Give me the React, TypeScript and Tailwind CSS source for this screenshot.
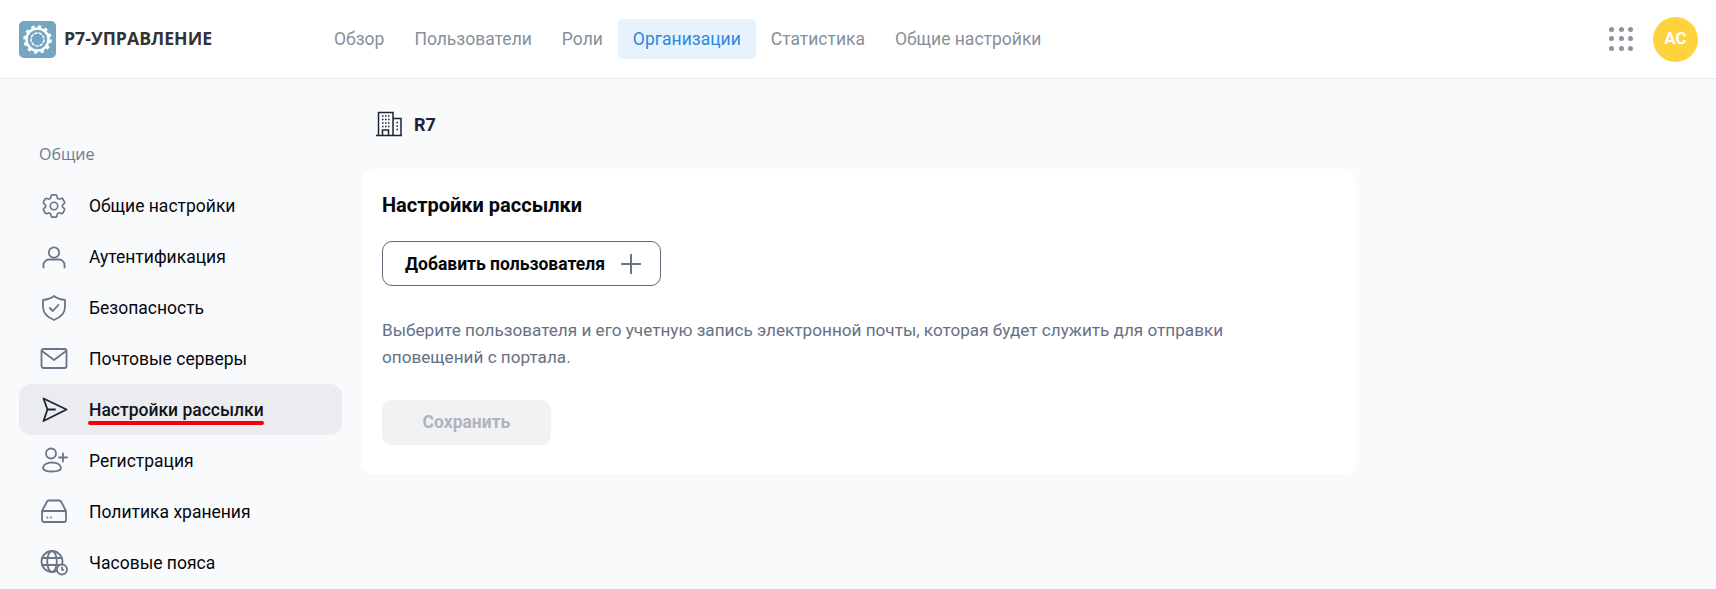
import type { ReactNode } from "react";

const navItems = ["Обзор", "Пользователи", "Роли", "Организации", "Статистика", "Общие настройки"];

const iconClass = "h-[30px] w-[30px] shrink-0 fill-none stroke-[#6b7588] stroke-[1.8]";

function Icon({ children, className = iconClass }: { children: ReactNode; className?: string }) {
  return (
    <svg viewBox="0 0 30 30" strokeLinecap="round" strokeLinejoin="round" className={className}>
      {children}
    </svg>
  );
}

const sideItems: { label: string; icon: ReactNode; active?: boolean }[] = [
  {
    label: "Общие настройки",
    icon: (
      <svg viewBox="1.5 1.5 21 21" strokeLinecap="round" strokeLinejoin="round" className="h-[30px] w-[30px] shrink-0 fill-none stroke-[#6b7588] stroke-[1.35] p-[2px]">
        <path d="M9.594 3.94c.09-.542.56-.94 1.11-.94h2.593c.55 0 1.02.398 1.11.94l.213 1.281c.063.374.313.686.645.87.074.04.147.083.22.127.325.196.72.257 1.075.124l1.217-.456a1.125 1.125 0 0 1 1.37.49l1.296 2.247a1.125 1.125 0 0 1-.26 1.431l-1.003.827c-.293.241-.438.613-.43.992a7.723 7.723 0 0 1 0 .255c-.008.378.137.75.43.991l1.004.827c.424.35.534.955.26 1.43l-1.298 2.247a1.125 1.125 0 0 1-1.369.491l-1.217-.456c-.355-.133-.75-.072-1.076.124a6.47 6.47 0 0 1-.22.128c-.331.183-.581.495-.644.869l-.213 1.281c-.09.543-.56.94-1.11.94h-2.594c-.55 0-1.019-.398-1.11-.94l-.213-1.281c-.062-.374-.312-.686-.644-.87a6.52 6.52 0 0 1-.22-.127c-.325-.196-.72-.257-1.076-.124l-1.217.456a1.125 1.125 0 0 1-1.369-.49l-1.297-2.247a1.125 1.125 0 0 1 .26-1.431l1.004-.827c.292-.24.437-.613.43-.991a6.932 6.932 0 0 1 0-.255c.007-.38-.138-.751-.43-.992l-1.004-.827a1.125 1.125 0 0 1-.26-1.43l1.297-2.247a1.125 1.125 0 0 1 1.37-.491l1.216.456c.356.133.751.072 1.076-.124.072-.044.146-.086.22-.128.332-.183.582-.495.644-.869l.214-1.28Z" />
        <circle cx="12" cy="12" r="3" />
      </svg>
    ),
  },
  {
    label: "Аутентификация",
    icon: (
      <Icon>
        <circle cx="15" cy="10.5" r="5.2" />
        <path d="M4.5 25.5V23a5.5 5.5 0 0 1 5.5-5.5h10a5.5 5.5 0 0 1 5.5 5.5v2.5" />
      </Icon>
    ),
  },
  {
    label: "Безопасность",
    icon: (
      <Icon>
        <path d="M15 3c3 2.500 7 3.600 11 3.900V14c0 6-5 10.500-11 13C9 24.500 4 20 4 14V6.900C8 6.600 12 5.500 15 3Z" />
        <path d="m10.800 15 3 3 5.600-6" />
      </Icon>
    ),
  },
  {
    label: "Почтовые серверы",
    icon: (
      <Icon>
        <rect x="2.500" y="5" width="25" height="19" rx="2" />
        <path d="m3 7 12 9 12-9" />
      </Icon>
    ),
  },
  {
    label: "Настройки рассылки",
    active: true,
    icon: (
      <Icon className="h-[30px] w-[30px] shrink-0 fill-none stroke-[#1d2433] stroke-[1.8]">
        <path d="M4.500 3.500 27.500 14.500 4.500 26 8.500 14.500Z" />
        <path d="M8.500 14.500H16" />
      </Icon>
    ),
  },
  {
    label: "Регистрация",
    icon: (
      <Icon>
        <circle cx="12" cy="7.500" r="5" />
        <path d="M13 16.500c5 0 9 2.300 9 5.300 0 2.400-4 3.700-9 3.700s-9-1.300-9-3.700c0-3 4-5.300 9-5.300Z" />
        <path d="M24 7.500v8M20 11.500h8" />
      </Icon>
    ),
  },
  {
    label: "Политика хранения",
    icon: (
      <Icon>
        <path d="M3 14 8 4.500a2 2 0 0 1 1.500-1h11a2 2 0 0 1 1.500 1L27 14" />
        <rect x="3" y="14" width="24" height="11" rx="2" />
        <path d="M8.500 20.500h.01M12 20.500h.01" />
      </Icon>
    ),
  },
  {
    label: "Часовые пояса",
    icon: (
      <Icon>
        <circle cx="13" cy="13.500" r="10.500" />
        <ellipse cx="13" cy="13.500" rx="4.800" ry="10.500" />
        <path d="M3 10h20M3 17h20" />
        <circle cx="23" cy="21.500" r="5" className="fill-[#f9fafc]" />
        <path d="M23 19.500v2.300h1.500" />
      </Icon>
    ),
  },
];

function Logo() {
  return (
    <div className="flex h-[37px] w-[37px] items-center justify-center rounded-[5px] bg-[#74a5c1]">
      <svg viewBox="0 0 37 37" className="h-[37px] w-[37px] fill-none stroke-white">
        <circle cx="18.500" cy="18.500" r="11" strokeWidth="2.500" />
        <circle cx="18.500" cy="18.500" r="13" strokeWidth="2.500" strokeDasharray="3.400 3.410" />
        <circle cx="18.500" cy="18.500" r="6.500" strokeWidth="1.500" strokeDasharray="3.500 0.900" />
      </svg>
    </div>
  );
}

function Building() {
  return (
    <svg viewBox="0 0 28 28" className="h-[28px] w-[28px] fill-none stroke-[#1d2433] stroke-[1.5]">
      <path d="M1 25.500h26M3.500 25.500V2.500h14.500v23M18 8.500h8v17" />
      <path d="M7.500 25.500v-5.500h6v5.500" />
      <path d="M7 6h1.500M10 6h1.500M13 6h1.500M7 9.500h1.500M10 9.500h1.500M13 9.500h1.500M7 13h1.500M10 13h1.500M13 13h1.500M7 16.500h1.500M10 16.500h1.500M13 16.500h1.500M21.500 12.500h1.500M21.500 16h1.500M21.500 19.500h1.500" />
    </svg>
  );
}

export default function App() {
  return (
    <div className="flex h-screen flex-col overflow-hidden bg-[#f9fafc] font-['Roboto',sans-serif] text-[17.5px]">
      <header className="flex h-[79px] shrink-0 items-center border-b border-[#e5e9ef] bg-white pl-[19px] pr-[18px]">
        <div className="flex w-[300px] items-center gap-[8px]">
          <Logo />
          <span className="pb-[2px] font-['Open_Sans',sans-serif] text-[17.7px] font-bold text-[#333333]">Р7-УПРАВЛЕНИЕ</span>
        </div>
        <nav className="flex items-center">
          {navItems.map((item) =>
            item === "Организации" ? (
              <a key={item} className="flex h-[40px] items-center rounded-[5px] bg-[#e6f3fd] px-[15px] text-[#2f86e0]">
                {item}
              </a>
            ) : (
              <a key={item} className="flex h-[40px] items-center px-[15px] text-[#87909b]">
                {item}
              </a>
            ),
          )}
        </nav>
        <div className="ml-auto flex items-center gap-[20px]">
          <div className="mb-[1px] grid grid-cols-3 gap-[4.500px]">
            {Array.from({ length: 9 }).map((_, i) => (
              <span key={i} className="h-[5px] w-[5px] rounded-full bg-[#8a949e]" />
            ))}
          </div>
          <div className="flex h-[45px] w-[45px] items-center justify-center rounded-full bg-[#ffd33d] text-[17px] font-bold text-white">
            AC
          </div>
        </div>
      </header>

      <div className="flex flex-1 pl-[19px]">
        <aside className="w-[323px] shrink-0">
          <p className="mb-[13px] mt-[62px] h-[26px] pl-[20px] font-['Open_Sans',sans-serif] text-[16px] leading-[26px] text-[#6b7a90]">
            Общие
          </p>
          <ul>
            {sideItems.map((item) => (
              <li
                key={item.label}
                className={
                  item.active
                    ? "relative flex h-[51px] items-center gap-[20px] rounded-[12px] bg-[#ebecf0] px-[20px] font-medium text-[#10131a]"
                    : "flex h-[51px] items-center gap-[20px] px-[20px] text-[#05070c]"
                }
              >
                {item.icon}
                <span className="pt-[2px]">{item.label}</span>
                {item.active && (
                  <span className="absolute bottom-[10px] left-[69px] h-[4px] w-[176px] rounded-full bg-[#f5000f]" />
                )}
              </li>
            ))}
          </ul>
        </aside>

        <main className="ml-[20px] w-[994px] shrink-0">
          <div className="flex h-[90px] items-center gap-[11px] pl-[13px]">
            <Building />
            <h1 className="text-[18px] font-bold text-[#1d2433]">R7</h1>
          </div>
          <section className="rounded-[12px] bg-white px-[20px] pb-[29px] pt-[22px]">
            <h2 className="text-[20px] font-bold leading-[28px] text-[#05070c]">Настройки рассылки</h2>
            <button className="mt-[22px] flex h-[45px] w-[279px] items-center gap-[14px] rounded-[10px] border border-[#5f6879] bg-white pl-[22px] font-bold text-[#05070c]">
              <span className="pt-[2px]">Добавить пользователя</span>
              <svg viewBox="0 0 24 24" className="h-[24px] w-[24px] fill-none stroke-[#6b7588] stroke-[2]">
                <path d="M12 2v20M2 12h20" />
              </svg>
            </button>
            <p className="mt-[31px] text-[17.15px] leading-[27px] text-[#667085]">
              Выберите пользователя и его учетную запись электронной почты, которая будет служить для отправки
              <br />
              оповещений с портала.
            </p>
            <button className="mt-[29px] h-[45px] w-[169px] rounded-[10px] bg-[#f1f2f4] font-bold text-[#aeb5bf]">
              Сохранить
            </button>
          </section>
        </main>
      </div>
    </div>
  );
}
